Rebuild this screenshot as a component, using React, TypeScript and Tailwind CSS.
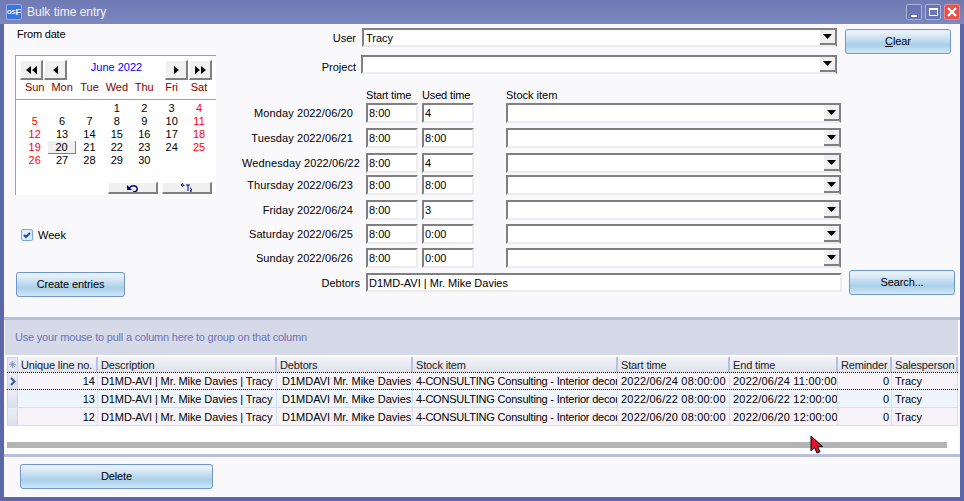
const COLS = "grid grid-cols-[11px_80px_179px_136px_205px_112px_108px_54px_66px]";

const DAYS = [
  { label: "Monday 2022/06/20", start: "8:00", used: "4", row: "h-[25px]" },
  { label: "Tuesday 2022/06/21", start: "8:00", used: "8:00", row: "h-[25px]" },
  { label: "Wednesday 2022/06/22", start: "8:00", used: "4", row: "h-[22px]" },
  { label: "Thursday 2022/06/23", start: "8:00", used: "8:00", row: "h-[25px]" },
  { label: "Friday 2022/06/24", start: "8:00", used: "3", row: "h-[24px]" },
  { label: "Saturday 2022/06/25", start: "8:00", used: "0:00", row: "h-[24px]" },
  { label: "Sunday 2022/06/26", start: "8:00", used: "0:00", row: "h-[25px]" },
];

const WEEKS = [
  ["", "", "", "1", "2", "3", "4"],
  ["5", "6", "7", "8", "9", "10", "11"],
  ["12", "13", "14", "15", "16", "17", "18"],
  ["19", "20", "21", "22", "23", "24", "25"],
  ["26", "27", "28", "29", "30", "", ""],
];

const ROWS = [
  { id: "14", debtor: "D1MDAVI Mr. Mike Davies", start: "2022/06/24 08:00:00", end: "2022/06/24 11:00:00", bg: "bg-[#f8f3f8]", active: true },
  { id: "13", debtor: "D1MDAVI Mr. Mike Davies", start: "2022/06/22 08:00:00", end: "2022/06/22 12:00:00", bg: "bg-[#eef5fd]", active: false },
  { id: "12", debtor: "D1MDAVI Mr. Mike Davies", start: "2022/06/20 08:00:00", end: "2022/06/20 12:00:00", bg: "bg-[#f8f3f8]", active: false },
];

function Sunken({ className, children }: { className: string; children?: React.ReactNode }) {
  return (
    <div className={`flex items-center overflow-hidden border-2 border-t-[#808080] border-l-[#808080] border-r-[#ececec] border-b-[#ececec] bg-white pl-[1px] ${className}`}>
      {children}
    </div>
  );
}

function Combo({ className, children }: { className: string; children?: React.ReactNode }) {
  return (
    <div className={`flex border-2 border-t-[#808080] border-l-[#808080] border-r-[#808080] border-b-[#ececec] bg-white ${className}`}>
      <div className="flex flex-1 items-center pl-[2px]">{children}</div>
      <div className="flex w-[15px] items-center justify-center border-b-2 border-b-[#808080] bg-[#f0f0f0]">
        <svg width="9" height="5" viewBox="0 0 9 5"><path d="M0 0h9L4.5 5z" fill="#000" /></svg>
      </div>
    </div>
  );
}

function GlossButton({ className, children }: { className: string; children: React.ReactNode }) {
  return (
    <div className={`flex items-center justify-center rounded-[3px] border border-[#6f97cc] bg-gradient-to-b from-[#e8f1f9] from-10% via-[#a9cfea] via-65% to-[#d3e7f6] pb-[1px] tracking-[-0.1px] text-black ${className}`}>
      {children}
    </div>
  );
}

function NavButton({ className, children }: { className: string; children: React.ReactNode }) {
  return (
    <div className={`flex items-center justify-center border-r-2 border-b-2 border-r-[#808080] border-b-[#808080] border-t border-l border-t-white border-l-white bg-[#f0f0f0] ${className}`}>
      {children}
    </div>
  );
}

function Calendar() {
  return (
    <div className="ml-[11px] mt-[14px] h-[140px] w-[201px] border-t border-l border-t-[#a0a0a0] border-l-[#a0a0a0] bg-white">
      <div className="relative flex h-[44px] flex-col border-b border-b-[#a0a0a0]">
        <div className="flex h-[24px] items-end pl-[4px] pr-[4px]">
          <NavButton className="h-[20px] w-[23px]">
            <svg width="11" height="8" viewBox="0 0 11 8"><path d="M5 0v8L0 4zM11 0v8L6 4z" fill="#000" /></svg>
          </NavButton>
          <NavButton className="ml-[1px] h-[20px] w-[23px]">
            <svg width="5" height="8" viewBox="0 0 5 8"><path d="M5 0v8L0 4z" fill="#000" /></svg>
          </NavButton>
          <div className="flex h-[20px] flex-1 items-start justify-center pl-[1px] text-[#0000ff]">June 2022</div>
          <NavButton className="h-[20px] w-[23px]">
            <svg width="5" height="8" viewBox="0 0 5 8"><path d="M0 0v8l5-4z" fill="#000" /></svg>
          </NavButton>
          <NavButton className="ml-[1px] h-[20px] w-[23px]">
            <svg width="11" height="8" viewBox="0 0 11 8"><path d="M0 0v8l5-4zM6 0v8l5-4z" fill="#000" /></svg>
          </NavButton>
        </div>
        <div className="grid grid-cols-[repeat(7,27.4px)] pl-[5px] text-center text-[#800000]">
          {["Sun", "Mon", "Tue", "Wed", "Thu", "Fri", "Sat"].map((d) => (
            <div key={d} className="h-[14px] leading-[14px]">{d}</div>
          ))}
        </div>
      </div>
      <div className="grid grid-cols-[repeat(7,27.4px)] pl-[5px] pt-[2px] text-center">
        {WEEKS.flat().map((d, i) => (
          <div
            key={i}
            className={`h-[13px] leading-[13px] ${i % 7 === 0 || i % 7 === 6 ? "text-[#ff0000]" : "text-black"} ${
              d === "20" ? "border-r border-b border-r-[#808080] border-b-[#808080] bg-[#efefef]" : ""
            }`}
          >
            {d}
          </div>
        ))}
      </div>
      <div className="mt-[15px] flex justify-end gap-[4px] pr-[4px]">
        <NavButton className="h-[12px] w-[50px]">
          <svg width="13" height="8" viewBox="0 0 13 8" fill="none">
            <path d="M1 1v5h5z" fill="#00007f" />
            <path d="M3 4c3-3 7-3 8 0s-2 4-4 4" stroke="#00007f" strokeWidth="1.4" />
          </svg>
        </NavButton>
        <NavButton className="h-[12px] w-[50px]">
          <svg width="15" height="10" viewBox="0 0 15 10" fill="none" stroke="#00007f" strokeWidth="1">
            <path d="M4 0L2 2l2 2M2 2h3v1M7 2h4M9 2v6M11 5c2 0 2 3 0 3M12 7v2" />
          </svg>
        </NavButton>
      </div>
    </div>
  );
}

function DataGrid() {
  return (
    <div className="flex flex-1 flex-col bg-white">
      <div className={`${COLS} h-[17px] border-t-2 border-t-white tracking-[-0.15px]`}>
        <div className="flex items-center justify-center border border-[#cdd2ec] bg-[#e4e6f2]">
          <svg width="7" height="7" viewBox="0 0 7 7" stroke="#8f9ac8" strokeWidth="1"><path d="M3.5 0v7M0 3.5h7M1 1l5 5M6 1L1 6" /></svg>
        </div>
        {["Unique line no.", "Description", "Debtors", "Stock item", "Start time", "End time", "Reminder", "Salesperson"].map((h) => (
          <div key={h} className="flex items-center overflow-hidden whitespace-nowrap border-r-2 border-r-[#b7c0e4] bg-gradient-to-b from-[#f4f5fa] to-[#dfe1ec] pl-[3px] text-[#202020]">
            {h}
          </div>
        ))}
      </div>
      {ROWS.map((r) => {
        const cell = `flex h-full items-center overflow-hidden whitespace-nowrap border-r border-r-[#d9dcf5] ${r.bg}`;
        return (
          <div key={r.id} className={`${COLS} h-[18px] ${r.active ? "border-y border-dotted border-black" : "border-b border-b-[#d9dcf5]"}`}>
            <div className="flex items-center justify-center border-x border-x-[#cdd2ec] bg-gradient-to-b from-[#eceef6] to-[#dcdfec]">
              {r.active && (
                <svg width="6" height="9" viewBox="0 0 6 9" fill="none"><path d="M1 1l3.5 3.5L1 8" stroke="#3c5a9a" strokeWidth="2" /></svg>
              )}
            </div>
            <div className={`${cell} justify-end pr-[2px]`}>{r.id}</div>
            <div className={`${cell} pl-[3px] tracking-[-0.1px]`}>D1MD-AVI | Mr. Mike Davies | Tracy</div>
            <div className={`${cell} pl-[5px]`}>{r.debtor}</div>
            <div className={`${cell} pl-[3px] tracking-[-0.2px]`}>4-CONSULTING Consulting - Interior decor</div>
            <div className={`${cell} pl-[3px] tracking-[0.2px]`}>{r.start}</div>
            <div className={`${cell} pl-[3px] tracking-[0.2px]`}>{r.end}</div>
            <div className={`${cell} justify-end pr-[2px]`}>0</div>
            <div className={`${cell} pl-[3px]`}>Tracy</div>
          </div>
        );
      })}
      <div className="mt-[16px] h-[6px] w-[940px] bg-[#b4b4b4]" />
    </div>
  );
}

export default function App() {
  return (
    <div className="relative flex h-[501px] w-[964px] flex-col overflow-hidden bg-[#5b67a8] font-['Liberation_Sans',sans-serif] text-[11px] leading-[14px] text-black">
      {/* Title bar */}
      <div className="flex h-[24px] items-center bg-gradient-to-b from-[#6f7ab5] to-[#7d87bd] pl-[6px] pr-[4px] text-[#f2f2fa]">
        <div className="flex h-[16px] w-[16px] items-center justify-center rounded-[2px] border border-[#8fb0ee] bg-[#3f74e0] text-[9px] font-bold leading-none text-white">
          <span className="text-[6px]">OS</span>F
        </div>
        <span className="ml-[5px] flex-1 text-[12px]">Bulk time entry</span>
        <div className="flex gap-[3px]">
          <div className="flex h-[16px] w-[16px] items-end justify-center rounded-[2px] border border-[#aab0d6] bg-[#6a75b2] pb-[2px]">
            <div className="h-[2px] w-[6px] bg-white" />
          </div>
          <div className="flex h-[16px] w-[16px] items-center justify-center rounded-[2px] border border-[#aab0d6] bg-[#6a75b2]">
            <div className="h-[8px] w-[9px] border border-t-2 border-white" />
          </div>
          <div className="flex h-[16px] w-[16px] items-center justify-center rounded-[2px] border border-[#e88] bg-[#e8504a]">
            <svg width="10" height="10" viewBox="0 0 10 10"><path d="M1 1l8 8M9 1L1 9" stroke="#fff" strokeWidth="2.4" /></svg>
          </div>
        </div>
      </div>

      <div className="mx-[4px] mb-[4px] flex flex-1 flex-col bg-[#f9f9fc]">
        {/* Form */}
        <div className="flex h-[293px]">
          <div className="flex w-[238px] shrink-0 flex-col">
            <div className="pl-[13px] pt-[3px] tracking-[-0.2px]">From date</div>
            <Calendar />
            <div className="ml-[17px] mt-[33px] flex items-center gap-[5px]">
              <div className="flex h-[12px] w-[12px] items-center justify-center rounded-[2px] border border-[#7fa6d8] bg-[#dcebf8]">
                <svg width="8" height="7" viewBox="0 0 8 7" fill="none"><path d="M1 3l2 2 4-4" stroke="#1f4f94" strokeWidth="2" /></svg>
              </div>
              <span>Week</span>
            </div>
            <GlossButton className="ml-[12px] mt-[30px] h-[25px] w-[109px]">Create entries</GlossButton>
          </div>

          <div className="flex w-[603px] shrink-0 flex-col pt-[4px]">
            <div className="flex h-[27px] items-start">
              <div className="w-[118px] pr-[4px] pt-[3px] text-right">User</div>
              <Combo className="ml-[2px] h-[19px] w-[475px]">Tracy</Combo>
            </div>
            <div className="flex h-[22px] items-start">
              <div className="w-[118px] pr-[4px] pt-[5px] text-right">Project</div>
              <Combo className="ml-[1px] h-[19px] w-[476px]" />
            </div>
            <div className="flex h-[26px] items-end pb-[1px]">
              <div className="ml-[124px] w-[56px] tracking-[-0.2px]">Start time</div>
              <div className="w-[84px] tracking-[-0.15px]">Used time</div>
              <div>Stock item</div>
            </div>
            {DAYS.map((d) => (
              <div key={d.label} className={`flex items-start ${d.row}`}>
                <div className="w-[118px] whitespace-nowrap pr-[7px] pt-[3px] text-right tracking-[0.1px]">{d.label}</div>
                <Sunken className="ml-[6px] h-[20px] w-[52px]">{d.start}</Sunken>
                <Sunken className="ml-[4px] h-[20px] w-[52px]">{d.used}</Sunken>
                <Combo className="ml-[32px] h-[20px] w-[335px]" />
              </div>
            ))}
            <div className="flex items-start">
              <div className="w-[118px] pt-[3px] text-right">Debtors</div>
              <Sunken className="ml-[6px] h-[19px] w-[476px]">D1MD-AVI | Mr. Mike Davies</Sunken>
            </div>
          </div>

          <div className="flex flex-1 flex-col">
            <GlossButton className="mt-[5px] h-[25px] w-[106px]">
              <span><span className="underline">C</span>lear</span>
            </GlossButton>
            <GlossButton className="ml-[4px] mt-[216px] h-[25px] w-[106px]">Search...</GlossButton>
          </div>
        </div>

        {/* Group panel and grid */}
        <div className="flex h-[140px] flex-col border-t-[3px] border-b-[3px] border-t-[#b8bedc] border-b-[#b8bedc] pl-[1px] pr-[2px]">
          <div className="flex h-[35px] items-start bg-[#d6d9e8] pl-[10px] pt-[10px] tracking-[-0.2px] text-[#6b74b8]">
            Use your mouse to pull a column here to group on that column
          </div>
          <div className="flex flex-1 bg-white pl-[2px]">
            <DataGrid />
          </div>
        </div>

        {/* Footer */}
        <div className="flex-1 pl-[16px] pt-[7px]">
          <GlossButton className="h-[25px] w-[193px]">Delete</GlossButton>
        </div>
      </div>

      {/* Mouse pointer */}
      <svg className="absolute left-[810px] top-[435px]" width="14" height="20" viewBox="0 0 14 20">
        <path d="M1 1v15l3.5-3.5 2.5 5.5 3-1.3-2.5-5.2h5z" fill="#e8102c" stroke="#000" strokeWidth="1" />
      </svg>
    </div>
  );
}
